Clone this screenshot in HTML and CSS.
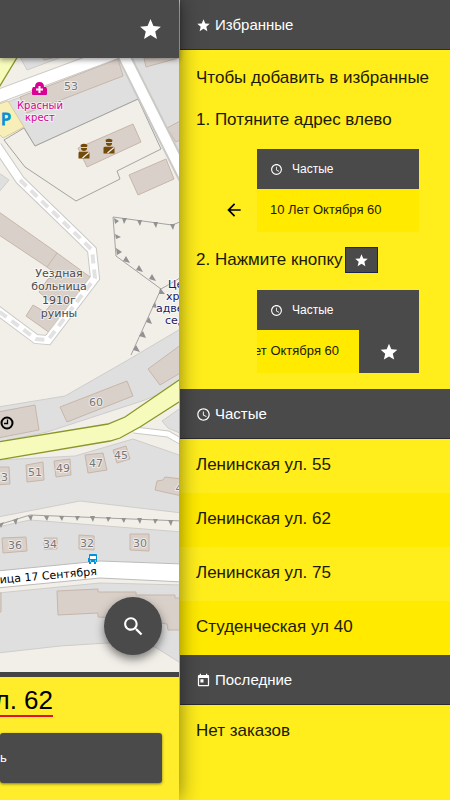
FILE: index.html
```html
<!DOCTYPE html>
<html lang="ru">
<head>
<meta charset="utf-8">
<meta name="viewport" content="width=device-width, initial-scale=1">
<title>Избранные</title>
<link rel="stylesheet" href="styles.css">
</head>
<body>
<svg class="defs" aria-hidden="true">
  <symbol id="star" viewBox="0 0 24 24"><path d="M12 17.27 18.18 21l-1.64-7.03L22 9.24l-7.19-.61L12 2 9.19 8.63 2 9.24l5.46 4.73L5.82 21z"/></symbol>
  <symbol id="clock" viewBox="0 0 24 24"><path d="M11.99 2C6.47 2 2 6.48 2 12s4.47 10 9.99 10C17.52 22 22 17.52 22 12S17.52 2 11.99 2zM12 20c-4.42 0-8-3.58-8-8s3.58-8 8-8 8 3.58 8 8-3.58 8-8 8zm.5-13H11v6l5.25 3.15.75-1.23-4.5-2.67z"/></symbol>
  <symbol id="calendar" viewBox="0 0 24 24"><path d="M19 3h-1V1h-2v2H8V1H6v2H5c-1.11 0-1.99.9-1.99 2L3 19c0 1.1.89 2 2 2h14c1.1 0 2-.9 2-2V5c0-1.1-.9-2-2-2zm0 16H5V8h14v11zM7 10h5v5H7z"/></symbol>
  <symbol id="arrow" viewBox="0 0 24 24"><path d="M20 11H7.83l5.59-5.59L12 4l-8 8 8 8 1.41-1.41L7.83 13H20z"/></symbol>
  <symbol id="search" viewBox="0 0 24 24"><path d="M15.5 14h-.79l-.28-.27C15.41 12.59 16 11.11 16 9.5 16 5.91 13.09 3 9.5 3S3 5.91 3 9.5 5.91 16 9.5 16c1.61 0 3.09-.59 4.23-1.57l.27.28v.79l5 4.99L20.49 19zM9.5 14C7.01 14 5 11.99 5 9.5S7.01 5 9.5 5 14 7.01 14 9.5 11.99 14 9.5 14z"/></symbol>
</svg>

<main class="page">
  <header class="topbar">
    <button class="icon-button" aria-label="Избранные"><svg class="icon icon-lg"><use href="#star"/></svg></button>
  </header>
  <section class="map" aria-label="Карта">
    <svg class="map-canvas" viewBox="0 58 180 614" preserveAspectRatio="xMinYMin slice">
      <defs>
        <g id="guard">
          <path d="M-3.500-8Q0-10.500 3.500-8L3-6H-3zM-3-5H3V-4Q2.500-2 0-2T-3-4z"/>
          <path d="M-5.500 0Q-5.500-1.200-4-1.200H4Q5.500-1.200 5.500 0V5.500H-5.500z"/>
          <path d="M-1.500 5 5-.5" stroke="#f2efe9" stroke-width="1.2"/>
        </g>
      </defs>
      <rect class="land" y="58" width="180" height="614"/>
      <path class="lime" d="M-2 56H18L-2 89z"/>
      <path class="area" d="M20 57 27 70 62 57zM131 57H182V168L150 97zM-1 173 9 180-1 192z"/>
      <path class="area" d="M5 103 122 59 138 99 35 146 21 122z"/>
      <path class="building" d="M20 97 118 59 123 76 27 113zM42 57 44 60 56 57zM144 58 146 67 182 57zM182 120 167 128 176 142 182 139z"/>
      <path class="parking" d="M-1 104 8 101 24 127 3 138-1 134z"/>
      <path class="fence" d="M138 99 35 146 24 128 4 140 25 167 76 201 120 179 117 171 161 149z"/>
      <path class="building" d="M78 148 133 124 141 142 87 167zM129 175 166 159 174 179 138 195z"/>
      <path class="building" d="M-1 212 53 250 90 277 50 333 26 316 33 305 45 312 52 303 39 292 48 279 58 275 47 267-1 235zM47 267 57 253"/>
      <g class="road-case"><path d="M-4 97 117 52M122 52 185 178" stroke-width="14"/><path d="M-3 146 20 180 82 240 92 250 95 278 48 340 36 339-3 310" stroke-width="10"/></g>
      <g class="road"><path d="M-4 97 117 52" stroke-width="12"/><path d="M122 52 185 178" stroke-width="10"/><path d="M-3 146 20 180 82 240 92 250 95 278 48 340 36 339-3 310" stroke-width="8"/></g>
      <path class="road-dash" d="M20 180 82 240 92 250 95 278 48 340 36 339-3 310"/>
      <path class="fence" d="M180 222 172 225 113 217 116 256 161 289 131 355M161 289 180 278"/>
      <path class="teeth" d="M122 218h5l-3 6zM137 220h5l-2 6zM153 222h5l-2 6zM170 224h5l-2 6zM114 218 119 221 115 224zM115 234 121 237 116 239zM116 248 122 252 117 255zM123 261 126 256 130 263zM136 270 139 265 143 272zM149 279 152 274 156 281zM160 288 165 294 159 294zM155 302 157 308 152 307zM149 317 152 324 146 322zM143 331 146 338 139 336zM136 345 140 352 133 350z"/>
      <path class="area" d="M-2 407 65 396 128 360 182 328V384L145 400 47 432-2 442zM162 421 182 407V434L168 428z"/>
      <path class="building" d="M60 407 127 381 133 396 67 422zM148 369 182 344V372L160 385zM-2 412 35 405 39 430-2 438z"/>
      <path class="area" d="M-2 460 75 456 133 439 182 456V565L100 562-2 571z"/>
      <path class="road-case" d="M134 430 168 434 182 442" stroke-width="7"/><path class="road" d="M134 430 168 434 182 442" stroke-width="5"/>
      <path class="lime" d="M-2 442 108 424 125 417 182 378V400L140 427 120 438 110 441-2 460z"/>
      <path class="building" d="M-4 467H9L10 484-4 485zM26 465 43 462 44 480 27 482zM54 461 70 459 71 475 56 477zM85 455 103 453 107 470 88 473zM113 450 126 446 130 459 117 463zM157 481 163 480 165 477 182 479V496L155 490z"/>
      <path class="land area-line" d="M-2 517 80 501 182 513V532L30 520-2 527z"/>
      <path class="fence" d="M-2 525 30 515 182 521"/>
      <path class="teeth" d="M-1 524 4 522 1 528zM13 520 18 518 16 525zM28 516 33 515 31 521zM44 516h5l-2 5zM59 516h5l-2 5zM75 516h5l-3 5zM90 516h5l-2 6zM106 517h5l-3 5zM121 518h5l-2 5zM137 518h5l-2 6zM153 519h5l-3 5zM168 520h5l-2 6z"/>
      <path class="building" d="M2 538 26 537 27 551 3 553zM44 538H57V549H44zM79 535 94 536 94 550 79 549zM130 534H149V551L130 550z"/>
      <path class="area" d="M-2 593 100 583 182 585V664L155 647 107 643 60 646-2 653z"/>
      <path class="building" d="M57 591 98 589V592L136 592V595L175 595V598H182V630L168 630 167 624 160 623 140 619 98 617V613L58 615zM-2 593H1V612H-2z"/>
      <path class="street" d="M-3 571 100 561 183 564V582L100 578-3 588z"/>

      <g class="pharmacy"><path d="M33 87H46l1 2v5q0 1-1 1H33q-1 0-1-1v-5zM35 87q0-5 4.500-5t4.500 5z"/><path d="M39.500 86v7M36 89.500h7" stroke="#fff" stroke-width="2"/></g>
      <g class="guards"><use href="#guard" x="84" y="153"/><use href="#guard" x="109" y="148"/></g>
      <g class="stop"><path d="M89 555q0-1 1-1h6q1 0 1 1v7h-1v2h-2v-2h-3v2h-2v-2h-1v-4h1z"/><path d="M90 556h6v3h-6z" fill="#fff"/><path d="M90 561h1M95 561h1" stroke="#fff"/></g>
      <g class="map-clock"><circle cx="7" cy="423" r="5.500"/><path d="M7.500 419.500V423.500H4"/></g>

      <g class="label brand"><text x="40" y="109">Красный</text><text x="40" y="121">крест</text></g>
      <text class="parking-mark" x="1" y="125">P</text>
      <g class="label place"><text x="59" y="277">Уездная</text><text x="59" y="290">больница</text><text x="59" y="304">1910г</text><text x="59" y="317">руины</text></g>
      <g class="label church"><text x="168" y="288">Це</text><text x="166" y="300">хр</text><text x="156" y="312">адве</text><text x="165" y="324">сед</text></g>
      <g class="label house"><text x="71" y="90">53</text><text x="96" y="406">60</text><text x="1" y="481">53</text><text x="35" y="476">51</text><text x="63" y="472">49</text><text x="96" y="467">47</text><text x="121" y="459">45</text><text x="179" y="492">4</text><text x="15" y="549">36</text><text x="50" y="548">34</text><text x="87" y="547">32</text><text x="140" y="547">30</text></g>
      <text class="street-name" x="97" y="575" transform="rotate(-5 97 575)">ица 17 Сентября</text>
    </svg>
    <button class="fab" aria-label="Поиск"><svg class="icon icon-lg"><use href="#search"/></svg></button>
  </section>
  <footer class="order">
    <a class="address" href="#">ул. 62</a>
    <button class="submit">ь</button>
  </footer>
</main>

<aside class="drawer">
  <h2 class="section-title"><svg class="icon icon-sm"><use href="#star"/></svg>Избранные</h2>
  <div class="help">
    <p>Чтобы добавить в избранные</p>
    <p>1. Потяните адрес влево</p>
    <div class="demo">
      <svg class="icon icon-md demo-arrow"><use href="#arrow"/></svg>
      <div class="demo-card">
        <div class="demo-title"><svg class="icon icon-xs"><use href="#clock"/></svg>Частые</div>
        <div class="demo-row"><span class="demo-address">10 Лет Октября 60</span></div>
      </div>
    </div>
    <p class="step-two">2. Нажмите кнопку <span class="star-chip"><svg class="icon icon-sm"><use href="#star"/></svg></span></p>
    <div class="demo">
      <div class="demo-card">
        <div class="demo-title"><svg class="icon icon-xs"><use href="#clock"/></svg>Частые</div>
        <div class="demo-row"><span class="demo-address swiped">ет Октября 60</span><span class="demo-star"><svg class="icon icon-md"><use href="#star"/></svg></span></div>
      </div>
    </div>
  </div>
  <h2 class="section-title"><svg class="icon icon-sm"><use href="#clock"/></svg>Частые</h2>
  <ul class="addresses">
    <li><a href="#">Ленинская ул. 55</a></li>
    <li><a href="#">Ленинская ул. 62</a></li>
    <li><a href="#">Ленинская ул. 75</a></li>
    <li><a href="#">Студенческая ул 40</a></li>
  </ul>
  <h2 class="section-title"><svg class="icon icon-sm"><use href="#calendar"/></svg>Последние</h2>
  <p class="empty">Нет заказов</p>
</aside>
</body>
</html>
```

FILE: styles.css
```css
* { box-sizing: border-box; }

body {
  margin: 0;
  min-height: 100vh;
  display: grid;
  grid-template-columns: 2fr 3fr;
  overflow: hidden;
  background: #ffed1c;
  color: #1c1a00;
  font: 17px/24px "Liberation Sans", sans-serif;
}

h2, p, ul { margin: 0; padding: 0; }
button { border: 0; padding: 0; font: inherit; color: #fff; background: #4a4a4a; }
a { color: inherit; text-decoration: none; }

.defs { position: absolute; width: 0; height: 0; }
.icon { flex: none; display: block; fill: currentColor; }
.icon-xs { width: 13px; height: 13px; }
.icon-sm { width: 15px; height: 15px; }
.icon-md { width: 20px; height: 20px; }
.icon-lg { width: 25px; height: 25px; }

/* Main page, pushed aside by the drawer */
.page {
  position: relative;
  z-index: 1;
  min-width: 0;
  display: flex;
  flex-direction: column;
  margin-right: 1px;
  box-shadow: 0 0 20px rgba(0, 0, 0, .5);
}
.topbar {
  position: relative;
  z-index: 1;
  display: flex;
  align-items: center;
  justify-content: flex-end;
  height: 58px;
  padding: 0 16px;
  background: #4a4a4a;
  box-shadow: 0 2px 5px rgba(0, 0, 0, .4);
}
.icon-button { background: none; }
.map { position: relative; flex: 1; min-height: 0; overflow: hidden; }
.map-canvas { position: absolute; inset: 0; width: 100%; height: 100%; display: block; }

.land { fill: #f2efe9; }
.area, .area-line { stroke: #cfcdca; stroke-width: 1; }
.area { fill: #dfdfdf; }
.building { fill: #d9d0c9; stroke: #c7b6aa; stroke-width: 1; }
.parking { fill: #f7efb7; stroke: #d8cd9a; }
.lime { fill: #f6fabb; stroke: #8a9627; stroke-width: 1.3; }
.fence { fill: none; stroke: #a3a3a0; stroke-width: 1; }
.teeth { fill: #929292; }
.road-case { fill: none; stroke: #cbc9c6; }
.road { fill: none; stroke: #fff; }
.road-dash { fill: none; stroke: #e2e2e2; stroke-width: 4; stroke-dasharray: 9 6; }
.street { fill: #fff; stroke: #bbb; }
.pharmacy { fill: #da0092; }
.guards { fill: #734a08; }
.stop { fill: #0092da; }
.map-clock { fill: none; stroke: #000; stroke-width: 2; }
.map-clock path { stroke-width: 1.3; }

.label, .parking-mark, .street-name { font-family: "DejaVu Sans", sans-serif; font-size: 11px; }
.label { text-anchor: middle; paint-order: stroke; stroke: rgba(255, 255, 255, .6); stroke-width: 2px; stroke-linejoin: round; }
.brand { fill: #da0092; font-size: 10px; }
.place { fill: #4c4c4c; }
.church { fill: #1a1a66; text-anchor: start; }
.house { fill: #777; }
.parking-mark { fill: #0092da; stroke: #0092da; font-size: 16px; }
.street-name { fill: #000; text-anchor: end; }

.fab {
  position: absolute;
  right: 17px;
  bottom: 17px;
  width: 58px;
  height: 58px;
  display: grid;
  place-items: center;
  border-radius: 50%;
  box-shadow: 0 4px 10px rgba(0, 0, 0, .5);
}

.order {
  height: 128px;
  padding: 8px 17px 17px 0;
  display: flex;
  flex-direction: column;
  align-items: flex-start;
  justify-content: space-between;
  border-top: 5px solid #444;
  background: #ffed2c;
}
.address {
  width: 53px;
  display: flex;
  justify-content: flex-end;
  overflow: hidden;
  white-space: nowrap;
  color: #000;
  font-size: 26px;
  line-height: 30px;
  border-bottom: 2px solid #e0102a;
}
.submit {
  width: 100%;
  height: 50px;
  text-align: left;
  font-size: 13px;
  border-radius: 3px;
  box-shadow: 0 1px 3px rgba(0, 0, 0, .5);
}

/* Drawer */
.drawer { min-width: 0; }
.section-title {
  display: flex;
  align-items: center;
  gap: 4px;
  height: 50px;
  padding: 1px 16px 0;
  color: #fff;
  background: #4a4a4a;
  font-size: 15px;
  font-weight: 400;
  border-bottom: 1px solid #2c2c30;
}
.help { padding: 16px; }
.help p { white-space: nowrap; }
.help p + p { margin-top: 18px; }
.demo {
  display: flex;
  align-items: flex-end;
  justify-content: flex-end;
  gap: 13px;
  margin: 17px 15px 0 0;
}
.demo-arrow { margin-bottom: 12px; color: #000; }
.demo-card { width: 162px; font-size: 13px; }
.demo-title {
  display: flex;
  align-items: center;
  gap: 9px;
  height: 40px;
  padding: 0 13px;
  color: #fff;
  background: #4a4a4a;
  font-size: 12px;
}
.demo-row { display: flex; height: 43px; background: #ffea00; }
.demo-address { flex: 1; padding: 0 13px; line-height: 42px; white-space: nowrap; overflow: hidden; }
.demo-address.swiped { display: flex; justify-content: flex-end; padding: 0 20px 0 0; }
.demo-star { flex: none; width: 60px; display: grid; place-items: center; color: #fff; background: #4a4a4a; }
.step-two { display: flex; align-items: center; gap: 2px; margin-top: 15px; }
.star-chip { width: 33px; height: 26px; display: grid; place-items: center; color: #fff; background: #4a4a4a; border: 1px solid #1c2450; }

.addresses { list-style: none; }
.addresses a { display: block; padding: 14px 16px 16px; }
.addresses li:nth-child(even) { background: #ffea00; }
.empty { padding: 14px 16px; }
```
